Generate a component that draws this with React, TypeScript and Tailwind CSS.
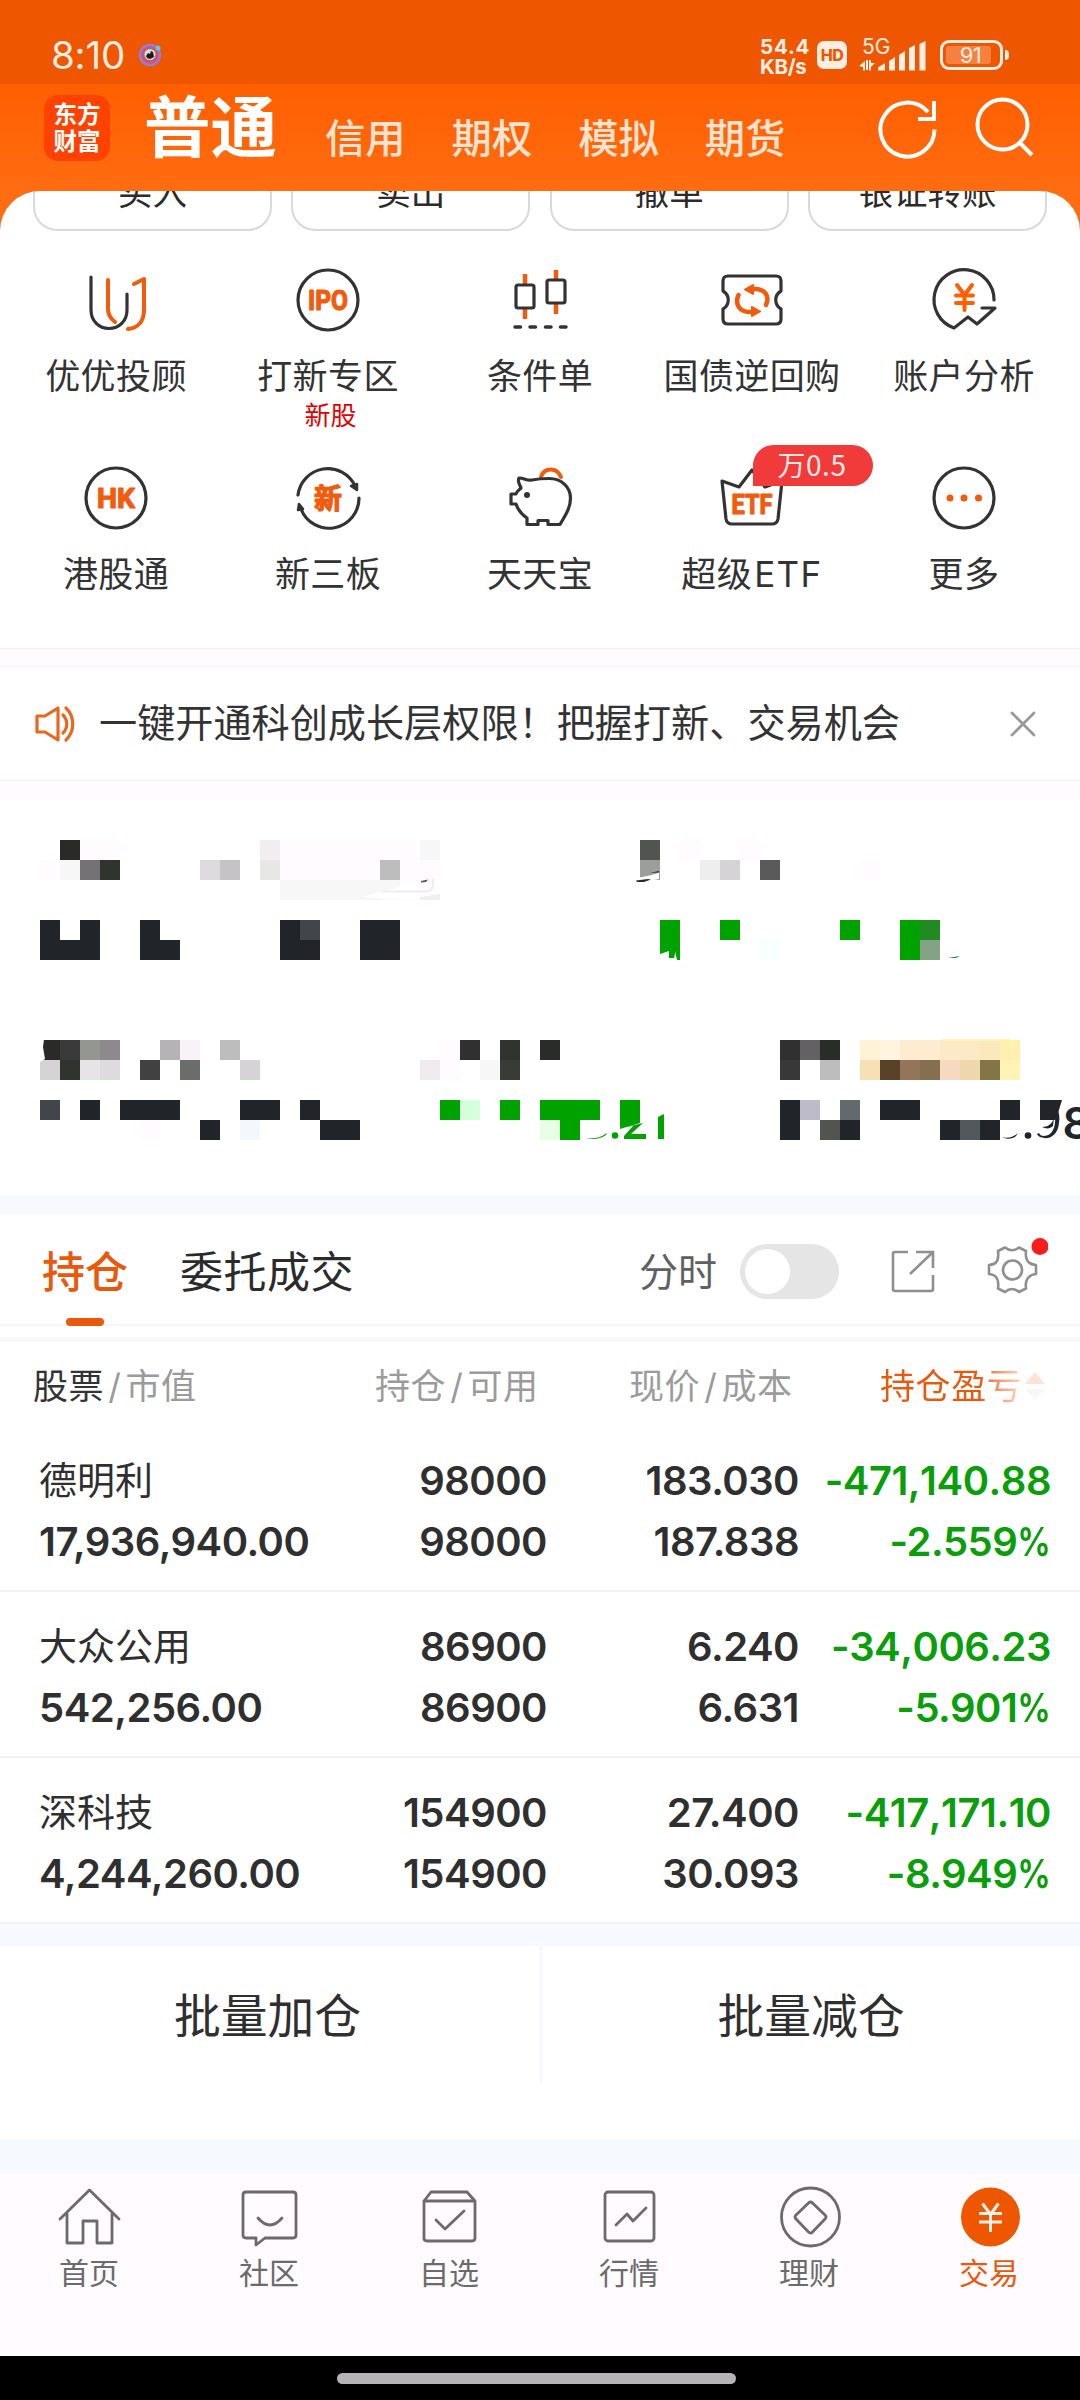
import type { ReactNode } from "react";

const DARK = "#21252a";
const GREEN = "#00a200";

/* ---------- status bar ---------- */

function StatusBar() {
  return (
    <div className="flex h-[84px] items-start bg-[#ee5600] pl-[51px] text-[#ffeee3]">
      <div className="mt-[32px] w-[87px] text-[38.500px] leading-[46px] tracking-[-0.2px]">8:10</div>
      <svg className="mt-[42px] h-[25px] w-[25px]" viewBox="0 0 25 25">
        <circle cx="12" cy="13" r="10" fill="#d8506a" stroke="#8f7fd8" strokeWidth="2.5" />
        <circle cx="12" cy="12.500" r="5.500" fill="#c9e6d8" />
        <path d="M8 14l2-3 2 1 1-3 2 1 1 5-4 2-3-1z" fill="#1b1b1b" />
        <circle cx="20" cy="6" r="2.500" fill="#4fd0f0" />
      </svg>
      <div className="mt-[37px] ml-[597px] w-[57px] text-[20.500px] leading-[20px] font-bold">
        <div className="tracking-[0.8px]">54.4</div>
        <div className="tracking-[-0.3px]">KB/s</div>
      </div>
      <div className="mt-[41px] flex h-[28px] w-[30px] items-center justify-center rounded-[7px] bg-[#ffeee3] text-[16px] leading-none font-extrabold tracking-[-0.5px] text-[#ee5600]">
        HD
      </div>
      <svg className="mt-[26px] ml-[12px] h-[46px] w-[70px]" viewBox="0 -10 70 46" fill="#ffeee3">
        <text x="3" y="17.500" fontSize="21" fontFamily="Inter">5G</text>
        <path d="M0 30l6-5v9.500h-2V31zM7 24h2v10H7zM10 24h2v3l4 0-4 4v3.500h-2z" />
        <path d="M19 34.500v-3l7-4.500v7.500zM30 34.500V25l6-4v13.500zM40 34.500V19l6-4v19.500zM50 34.500V12l6-3v25.500zM60.500 34.500V8l6-3v29.500z" />
      </svg>
      <div className="mt-[40px] ml-[11px] flex h-[30px] w-[63px] items-center rounded-[9px] border-[3px] border-[#ffeee3] p-[3px]">
        <div className="flex h-[18px] w-[45px] items-center justify-center rounded-[3px] bg-[#f6813f] pl-[4px] text-[22px] leading-none tracking-[-0.5px]">
          91
        </div>
      </div>
      <div className="mt-[50px] ml-[2px] h-[10px] w-[4px] rounded-r-[4px] bg-[#ffeee3]" />
    </div>
  );
}

/* ---------- orange header ---------- */

function Header() {
  const tabs = ["信用", "期权", "模拟", "期货"];
  return (
    <div className="flex h-[107px] items-start pl-[44px] text-white">
      <div className="mt-[11px] flex h-[66px] w-[66px] flex-col items-center justify-center rounded-[14px] bg-[#ff4200] text-[23.500px] leading-[27px] font-bold">
        <span>东方</span>
        <span>财富</span>
      </div>
      <div className="mt-[11px] ml-[34px] w-[133px] text-[66.500px] leading-[66px] font-bold whitespace-nowrap">普通</div>
      <div className="mt-[33px] ml-[48px] flex gap-[46px] text-[40.300px] leading-[44px] font-medium text-[#ffe2d0]">
        {tabs.map((t) => (
          <span key={t}>{t}</span>
        ))}
      </div>
      <svg className="mt-[13px] ml-[92px] h-[64px] w-[64px]" viewBox="0 0 64 64" fill="none" stroke="#fff" strokeWidth="4">
        <path d="M57.500 32.500A27 27 0 1 1 51 15" />
        <path d="M57 4v18H41" />
      </svg>
      <svg className="mt-[11px] ml-[31px] h-[64px] w-[64px]" viewBox="0 0 64 64" fill="none" stroke="#fff" strokeWidth="4">
        <circle cx="30.500" cy="29.500" r="25" />
        <path d="M47 47l13 13" />
      </svg>
    </div>
  );
}

function OrderButtons() {
  return (
    <div className="flex h-[40px] items-end justify-between overflow-hidden rounded-t-[46px] bg-white px-[33px]">
      {["买入", "卖出", "撤单", "银证转账"].map((t) => (
        <div
          key={t}
          className="h-[80px] w-[239px] shrink-0 rounded-[24px] border-2 border-[#dcd7dc] text-center text-[34.500px] leading-[79px] text-[#2b2b2b]"
        >
          {t}
        </div>
      ))}
    </div>
  );
}

/* ---------- shortcuts ---------- */

function Icon({ children }: { children: ReactNode }) {
  return (
    <svg
      className="h-[70px] w-[70px]"
      viewBox="0 0 70 70"
      fill="none"
      stroke="#333"
      strokeWidth="3.200"
      strokeLinecap="round"
      strokeLinejoin="round"
    >
      {children}
    </svg>
  );
}

const O = "#f25b0c";

function Glyph({ children, size, y, width }: { children: string; size: number; y: number; width: number }) {
  return (
    <text
      x="35"
      y={y}
      textAnchor="middle"
      fontSize={size}
      fontWeight="700"
      fontFamily="Roboto, 'Noto Sans CJK SC', sans-serif"
      fill={O}
      stroke={O}
      strokeWidth="1.200"
      textLength={width}
      lengthAdjust="spacingAndGlyphs"
    >
      {children}
    </text>
  );
}

const icons: Record<string, ReactNode> = {
  advisor: (
    <Icon>
      <path d="M10 12v33c0 11 8 18.500 18 18.500S46 56 46 45V29" />
      <path d="M27 15v29c0 6 3 10 7 13" stroke={O} strokeWidth="4" />
      <path d="M53 19l10-5v31c0 11-6 18-16 19" stroke={O} strokeWidth="4" />
    </Icon>
  ),
  ipo: (
    <Icon>
      <circle cx="35" cy="35" r="30" />
      <Glyph size={28} y={45} width={40}>IPO</Glyph>
    </Icon>
  ),
  condition: (
    <Icon>
      <path d="M20 9v10M20 44v10M51 5v9M51 39v10" stroke={O} strokeWidth="4.500" strokeLinecap="butt" />
      <rect x="11" y="20" width="18" height="23" rx="2" />
      <rect x="42" y="15" width="18" height="23" rx="2" />
      <path d="M10 62h5.500M25 62h5.500M40.500 62h5.500M55.500 62h5.500" strokeWidth="3.500" />
    </Icon>
  ),
  repo: (
    <Icon>
      <path d="M11 11h48q5 0 5 5v10c-7 4-7 14 0 18v10q0 5-5 5H11q-5 0-5-5V44c7-4 7-14 0-18V16q0-5 5-5z" />
      <path d="M21.500 30c-4 9 1 17 11 17h5M49 40c4-9-1-16-11-16h-5" stroke={O} strokeWidth="4.500" />
      <path d="M28 24.500l8-4.500v9zM43 46.500l-8-4.500v9z" fill={O} stroke={O} strokeWidth="2" />
    </Icon>
  ),
  analysis: (
    <Icon>
      <path d="M65 35A30 30 0 1 0 25 63l14-11 9 7 18-16H53" />
      <path d="M28 20l7.500 10L43 20M27 30.500h17M27 38h17M35.500 30v15" stroke="#ff5f00" strokeWidth="4" />
    </Icon>
  ),
  hk: (
    <Icon>
      <circle cx="35" cy="35" r="30" />
      <Glyph size={28} y={45} width={38}>HK</Glyph>
    </Icon>
  ),
  neeq: (
    <Icon>
      <path d="M5 32A30 30 0 0 1 62 23M66 35A30 30 0 0 1 8 46" />
      <path d="M58 23l6-2v6zM6 41l4 5-5 1z" fill="#333" strokeWidth="2.500" />
      <Glyph size={28} y={45.5} width={28}>新</Glyph>
    </Icon>
  ),
  piggy: (
    <Icon>
      <path d="M36 14c3-10 16-10 20 0" stroke={O} strokeWidth="4" />
      <path d="M14 15c6 0 7 3 13 2 5-1 12-1.500 17-1.500 13 0 21.500 9 21.500 19.500 0 10-5 17-10.500 26.500H43v-4H33v4H22V55c-6-4-9-8-11-14H6V31h5c1-3 3-4 5-6-1-3-4-6-2-10z" />
      <circle cx="22" cy="32" r="3" fill="#333" stroke="none" />
    </Icon>
  ),
  etf: (
    <Icon>
      <path d="M5 18l17 6L35 7l13 17 17-6-4 38q-1 5-6 5H15q-5 0-6-5z" />
      <Glyph size={28} y={50.5} width={41}>ETF</Glyph>
    </Icon>
  ),
  more: (
    <Icon>
      <circle cx="35" cy="35" r="30" />
      <g fill={O} stroke="none">
        <circle cx="21" cy="35" r="3.500" />
        <circle cx="35" cy="35" r="3.500" />
        <circle cx="49.500" cy="35" r="3.500" />
      </g>
    </Icon>
  ),
};

const shortcuts: { icon: string; label: ReactNode; note?: string; badge?: string }[] = [
  { icon: "advisor", label: "优优投顾" },
  { icon: "ipo", label: "打新专区", note: "新股" },
  { icon: "condition", label: "条件单" },
  { icon: "repo", label: "国债逆回购" },
  { icon: "analysis", label: "账户分析" },
  { icon: "hk", label: "港股通" },
  { icon: "neeq", label: "新三板" },
  { icon: "piggy", label: "天天宝" },
  { icon: "etf", label: <>超级<span className="pl-[2px] tracking-[1.400px]">ETF</span></>, badge: "万0.5" },
  { icon: "more", label: "更多" },
];

function Shortcuts() {
  return (
    <div className="grid h-[417px] auto-rows-[198px] grid-cols-5 bg-white px-[10px] pt-[34px]">
      {shortcuts.map((s) => (
        <div key={s.icon} className="relative flex flex-col items-center">
          {icons[s.icon]}
          <div className="mt-[16px] text-[35px] leading-[50px] tracking-[0.4px] whitespace-nowrap text-[#333]">{s.label}</div>
          {s.note && <div className="-mt-[5px] pl-[5px] text-[26px] leading-[40px] text-[#e60000]">{s.note}</div>}
          {s.badge && (
            <div className="absolute top-[-18px] left-[107px] h-[41px] w-[120px] rounded-[21px] rounded-bl-none bg-[#f13a3a] pr-[2px] text-center font-['Noto_Sans_CJK_SC'] text-[28px] leading-[39px] tracking-[0.5px] text-[#ffeaea]">
              {s.badge}
            </div>
          )}
        </div>
      ))}
    </div>
  );
}

/* ---------- notice ---------- */

function Notice() {
  return (
    <div className="flex h-[113px] items-center bg-white pl-[34px]">
      <svg className="h-[40px] w-[42px]" viewBox="0 0 42 40" fill="none" stroke="#e8681f" strokeWidth="3.200" strokeLinejoin="round" strokeLinecap="round">
        <path d="M3 12h8l13-8v32l-13-8H3zM24 4v32" />
        <path d="M29 11c5 5 5 13 0 18M32 4c9 9 9 23 0 32" />
      </svg>
      <div className="-mt-[1px] ml-[23px] w-[911px] text-[38.150px] leading-[50px] whitespace-nowrap text-[#333]">
        一键开通科创成长层权限！把握打新、交易机会
      </div>
      <svg className="h-[26px] w-[26px]" viewBox="0 0 26 26" stroke="#999" strokeWidth="2.800" strokeLinecap="round">
        <path d="M2 2l22 22M24 2L2 24" />
      </svg>
    </div>
  );
}

/* ---------- pixelated account summary: [x, y, width in cells, colour], 20px cells ---------- */

const cells: [number, number, number, string][] = [
  [60, 840, 1, "#2a2a29"], [80, 840, 2, "#fffbff"], [260, 840, 1, "#f1edf0"], [280, 840, 7, "#fffbff"], [420, 840, 1, "#f7f7f7"],
  [640, 840, 1, "#52554f"], [680, 840, 1, "#fffbff"], [740, 840, 1, "#fffbff"],
  [40, 860, 1, "#fffbff"], [60, 860, 1, "#f7f7f7"], [80, 860, 1, "#747275"], [100, 860, 1, "#31332e"],
  [200, 860, 1, "#dedbde"], [220, 860, 1, "#c5c3c6"], [260, 860, 1, "#e7e7e6"], [280, 860, 8, "#fffbff"], [380, 860, 1, "#bdbdbd"],
  [640, 860, 1, "#9c9e9b"], [700, 860, 1, "#efeeee"], [720, 860, 1, "#d6d3d6"], [760, 860, 1, "#5a5a5a"], [860, 860, 1, "#fffbff"],
  [280, 880, 6, "#f7f7f7"], [400, 880, 2, "#fffbff"],
  [40, 920, 1, DARK], [80, 920, 1, DARK], [140, 920, 1, DARK], [280, 920, 1, DARK], [300, 920, 1, "#42454a"], [360, 920, 2, DARK],
  [660, 920, 1, GREEN], [720, 920, 1, GREEN], [840, 920, 1, GREEN], [900, 920, 1, GREEN], [920, 920, 1, "#218a21"],
  [40, 940, 3, DARK], [140, 940, 2, DARK], [280, 940, 2, DARK], [360, 940, 2, DARK],
  [660, 940, 1, GREEN], [760, 940, 1, "#f7ffff"], [900, 940, 1, GREEN], [920, 940, 1, "#84a284"],
  [40, 1040, 1, "#2a2a29"], [60, 1040, 1, "#3a3a3a"], [80, 1040, 1, "#949691"], [100, 1040, 1, "#8c8a8c"],
  [160, 1040, 1, "#b5b3b6"], [180, 1040, 1, "#f7f3f7"], [220, 1040, 1, "#bdbdbd"], [440, 1040, 1, "#fffbff"],
  [460, 1040, 1, "#313031"], [500, 1040, 1, "#31332e"], [540, 1040, 1, "#2a2c29"],
  [780, 1040, 1, "#313031"], [800, 1040, 1, "#636163"], [820, 1040, 1, "#2a2c29"],
  [860, 1040, 1, "#fff3d6"], [880, 1040, 1, "#fff4e0"], [900, 1040, 2, "#ffebd0"], [940, 1040, 2, "#fceac6"], [980, 1040, 1, "#fce8bd"], [1000, 1040, 1, "#fff0ad"],
  [40, 1060, 1, "#d6d3d6"], [60, 1060, 1, "#31332e"], [80, 1060, 1, "#e7e3e7"], [100, 1060, 1, "#dedbde"],
  [140, 1060, 1, "#424142"], [180, 1060, 1, "#6b6d6a"], [240, 1060, 1, "#d6d3d6"],
  [420, 1060, 1, "#efebef"], [440, 1060, 1, "#fffbff"], [480, 1060, 1, "#f7f7f7"], [500, 1060, 1, "#393b36"],
  [780, 1060, 1, "#393839"], [820, 1060, 1, "#bdbdbd"],
  [860, 1060, 1, "#f7e0b5"], [880, 1060, 1, "#5a4228"], [900, 1060, 1, "#94755c"], [920, 1060, 1, "#84704f"],
  [940, 1060, 1, "#f7d9c1"], [960, 1060, 1, "#efd6ad"], [980, 1060, 1, "#847548"], [1000, 1060, 1, "#fff4b5"],
  [40, 1100, 1, "#42454a"], [80, 1100, 1, DARK], [120, 1100, 3, DARK], [240, 1100, 2, DARK], [300, 1100, 1, DARK],
  [440, 1100, 1, GREEN], [460, 1100, 1, "#d6ffdb"], [500, 1100, 1, GREEN], [540, 1100, 3, GREEN], [620, 1100, 1, GREEN],
  [780, 1100, 1, DARK], [800, 1100, 1, "#bdbac9"], [840, 1100, 1, "#636a6d"], [880, 1100, 2, DARK], [1000, 1100, 1, DARK],
  [140, 1120, 1, "#fffbff"], [200, 1120, 1, DARK], [240, 1120, 1, "#f5f7ff"], [320, 1120, 2, DARK],
  [540, 1120, 1, "#e7ffe7"], [560, 1120, 1, GREEN],
  [780, 1120, 1, DARK], [820, 1120, 1, "#52544f"], [840, 1120, 1, DARK], [940, 1120, 1, DARK], [960, 1120, 1, "#52595c"], [980, 1120, 1, DARK],
];

function AccountSummary() {
  return (
    <svg className="block h-[395px] w-[1080px] bg-white" viewBox="0 800 1080 395">
      <g shapeRendering="crispEdges">
        {cells.map(([x, y, w, c]) => (
          <rect key={`${x}-${y}`} x={x} y={y} width={w * 20} height="20" fill={c} />
        ))}
      </g>
      <path d="M363 896.500l37-9.500 4-3h29v-5h7v15l-16 4q-32 3-61-1.500z" fill="#fff" />
      <path d="M382 891.500h43q8 0 8-7V879" stroke="#efecef" strokeWidth="2" fill="none" />
      <path d="M421 881l7-1.500-2 2.500-5 .5z" fill="#555" />
      <path d="M420 900v-3l20-3v6z" fill="#f1edf0" />
      <path d="M633 881c5-5 15-4 25-8l1-1v7l-10 2h-16z" fill="#fff" />
      <path d="M636 880.500l12-1.500 3 .5-7 2.500h-7zM650 873l9-2v1.500z" fill="#2a2a29" />
      <path d="M660 954l9-3v7h5v-4l1 4v-7l2 9h-17z" fill="#fff" />
      <path d="M948 958l12-2-4 2z" fill={GREEN} />
      <path d="M39 1039h5l-1 8 2 12-5 3z" fill="#fff" />
      <rect x="942" y="1039" width="68" height="2" fill="#fff8a8" opacity=".8" />
      <path d="M586 1138c8 1 14 0 21-5l-1 2c-5 4-14 5-20 3z" fill={GREEN} />
      <circle cx="615" cy="1135.500" r="3.300" fill={GREEN} />
      <path d="M620 1120h20v3l-20 6z" fill={GREEN} />
      <path d="M626 1127l17-4-12 11h15v5h-22v-3l9-10z" fill={GREEN} />
      <path d="M658 1117l6-3v25h-6z" fill={GREEN} />
      <path d="M1040 1100h22l-4 13-3 7h-15z" fill={DARK} />
      <path d="M1002 1137c5 2 12 0 16-4l-2 3c-3 3-9 4-14 1z" fill={DARK} />
      <circle cx="1028" cy="1135.500" r="3.300" fill={DARK} />
      <path d="M1042 1127c6 0 10-3 12-9l-1 8c-3 3-7 3-11 1z" fill={DARK} />
      <path d="M1037 1134c3 6 20 8 22-11 1-6 0-11-2-15l-2 9c1 10-3 19-11 19-3 0-4-1-5-3z" fill={DARK} />
      <text x="1062.500" y="1139" fontSize="44" fontWeight="600" fontFamily="Inter" fill={DARK}>8</text>
    </svg>
  );
}

/* ---------- positions ---------- */

function PositionTabs() {
  return (
    <>
      <div className="flex h-[112px] items-start border-b-2 border-[#f6f6f6] bg-white pl-[42px] text-[43px] leading-[60px]">
        <div className="relative mt-[28px] font-medium text-[#e8590c]">
          持仓
          <div className="absolute top-[76px] left-[24px] h-[8px] w-[38px] rounded-[4px] bg-[#e8590c]" />
        </div>
        <div className="mt-[28px] ml-[52px] w-[178px] whitespace-nowrap tracking-[0.5px] text-[#2b2b2b]">委托成交</div>
        <div className="mt-[28px] ml-[281px] text-[39px] text-[#606060]">分时</div>
        <div className="mt-[30px] ml-[23px] h-[55px] w-[99px] rounded-full bg-[#e6e5e6] p-[5px]">
          <div className="h-[45px] w-[45px] rounded-full bg-white" />
        </div>
        <svg className="mt-[34px] ml-[50px] h-[46px] w-[46px]" viewBox="0 0 46 46" fill="none" stroke="#8f8f8f" strokeWidth="2.600">
          <path d="M19 4H6q-2 0-2 2v35q0 2 2 2h36q2 0 2-2V27" />
          <path d="M27 4h17v16M44 4L21 26" />
        </svg>
        <svg className="mt-[23px] ml-[47px] h-[64px] w-[66px]" viewBox="0 0 66 64" fill="none" stroke="#8f8f8f" strokeWidth="2.600" strokeLinejoin="round">
          <path d="M23 10.500Q30 16 37 10.500L44 14q-1 8 3 11.500 2 2 7 2.500v9q-5 .5-7 3-4 3.500-3 11.500L37 55q-7-6-14 0l-7-3.500q1-8-2-11.500-2-2.500-7-3v-9q5-.5 7-2.500 3-3.500 2-11.500z" />
          <circle cx="30.500" cy="33" r="9.500" />
          <circle cx="58" cy="9.500" r="8.500" fill="#fb1c1c" stroke="none" />
        </svg>
      </div>
      <div className="h-[11px] bg-white" />
      <div className="h-[5px] bg-[#f5faff]" />
    </>
  );
}

function Slash() {
  return <span className="px-[4px]">/</span>;
}

function HeaderRow() {
  return (
    <div className="flex h-[84px] bg-white pl-[33px] text-[35px] leading-[88px] tracking-[0.6px] whitespace-nowrap text-[#9b9b9b]">
      <div className="w-[342px]">
        <span className="text-[#333]">股票</span>
        <Slash />
        市值
      </div>
      <div className="w-[254px]">
        持仓
        <Slash />
        可用
      </div>
      <div className="w-[251px]">
        现价
        <Slash />
        成本
      </div>
      <div className="flex h-[88px] items-center">
        <span className="bg-linear-to-r from-[#e8590c] from-70% to-[#fbd9c4] bg-clip-text text-transparent">持仓盈亏</span>
        <svg className="ml-[3px] h-[30px] w-[20px]" viewBox="0 0 20 30">
          <path d="M10 1l10 12H0z" fill="#fde3d3" />
          <path d="M10 29L0 18h20z" fill="#f8f6f8" />
        </svg>
      </div>
    </div>
  );
}

const positions = [
  { name: "德明利", value: "17,936,940.00", qty: "98000", avail: "98000", price: "183.030", cost: "187.838", pl: "-471,140.88", pct: "-2.559" },
  { name: "大众公用", value: "542,256.00", qty: "86900", avail: "86900", price: "6.240", cost: "6.631", pl: "-34,006.23", pct: "-5.901" },
  { name: "深科技", value: "4,244,260.00", qty: "154900", avail: "154900", price: "27.400", cost: "30.093", pl: "-417,171.10", pct: "-8.949" },
];

function PositionRow({ p }: { p: (typeof positions)[number] }) {
  return (
    <div className="grid h-[166px] grid-cols-[290px_1fr_252px_252px] border-b-2 border-[#f1f2f4] bg-white pt-[24px] pr-[29px] pl-[39px] text-right text-[40px] leading-[61px] font-semibold tracking-[-0.500px] text-[#2f2f2f]">
      <div className="text-left">
        <div className="h-[61px] text-[38px] leading-[61px] font-normal tracking-normal">{p.name}</div>
        <div>{p.value}</div>
      </div>
      <div>
        <div>{p.qty}</div>
        <div>{p.avail}</div>
      </div>
      <div>
        <div>{p.price}</div>
        <div>{p.cost}</div>
      </div>
      <div className="text-[#0a9e0a]">
        <div className="[font-kerning:none]">{p.pl}</div>
        <div>
          {p.pct}
          <span className="ml-[-6px] inline-block origin-right scale-x-[0.84]">%</span>
        </div>
      </div>
    </div>
  );
}

/* ---------- bottom navigation ---------- */

function NavIcon({ children }: { children: ReactNode }) {
  return (
    <svg className="h-[64px] w-[64px]" viewBox="0 0 64 64" fill="none" stroke="#6b6b6b" strokeWidth="2.800" strokeLinecap="round" strokeLinejoin="round">
      {children}
    </svg>
  );
}

const nav: { label: string; active?: boolean; icon: ReactNode }[] = [
  {
    label: "首页",
    icon: (
      <NavIcon>
        <path d="M2 33L31.500 4 61 33M9 28v29h16V35h14v22h15V28" />
      </NavIcon>
    ),
  },
  {
    label: "社区",
    icon: (
      <NavIcon>
        <path d="M8 6h47q3 0 3 3v40q0 3-3 3H27l-9 7v-7H8q-3 0-3-3V9q0-3 3-3z" />
        <path d="M20 32q12 14 24 0" />
      </NavIcon>
    ),
  },
  {
    label: "自选",
    icon: (
      <NavIcon>
        <path d="M6 15l7-9h36l8 9v37q0 3-3 3H9q-3 0-3-3zM6 15h51M18 34l9 9 19-18" />
      </NavIcon>
    ),
  },
  {
    label: "行情",
    icon: (
      <NavIcon>
        <rect x="7" y="6" width="49" height="49" rx="3" />
        <path d="M18 39l11-11 6 7 13-13" />
      </NavIcon>
    ),
  },
  {
    label: "理财",
    icon: (
      <NavIcon>
        <circle cx="32.500" cy="31" r="29" />
        <path d="M30.500 17q2-2 4 0l12.500 12q2 2 0 4L34.500 46q-2 2-4 0L18 33q-2-2 0-4z" />
      </NavIcon>
    ),
  },
  {
    label: "交易",
    active: true,
    icon: (
      <NavIcon>
        <circle cx="32.500" cy="31" r="29.500" fill="#ee5600" stroke="none" />
        <path d="M24.500 17.500l8 11 8-11M21 27.500h23M21 36h23M32.500 28v18" stroke="#fff1e8" strokeWidth="3" strokeLinecap="butt" />
      </NavIcon>
    ),
  },
];

export default function App() {
  return (
    <div className="h-[2400px] w-[1080px] overflow-hidden bg-white font-['Inter','Noto_Sans_CJK_SC',sans-serif]">
      <StatusBar />
      <div className="bg-linear-to-b from-[#ff5f00] to-[#ff6d12] to-80%">
        <Header />
        <OrderButtons />
      </div>
      <Shortcuts />
      <div className="h-[19px] border-y border-[#f5f1f5] bg-[#fffbff]" />
      <Notice />
      <div className="h-[20px] border-t border-[#f5f1f5] bg-[#fffbff]" />
      <AccountSummary />
      <div className="h-[19px] bg-[#f6f9ff]" />
      <PositionTabs />
      <HeaderRow />
      {positions.map((p) => (
        <PositionRow key={p.name} p={p} />
      ))}
      <div className="h-[22px] bg-[#f6f9ff]" />
      <div className="flex h-[193px] bg-white text-[46.800px] leading-[140px] text-[#2f2f2f]">
        <div className="h-[137px] w-[543px] border-r-[4px] border-[#f8f9ff] pr-[4px] text-center">批量加仓</div>
        <div className="flex-1 pr-[1px] text-center">批量减仓</div>
      </div>
      <div className="h-[35px] bg-[#f6faff]" />
      <div className="flex h-[182px] bg-[#fffbff] pt-[12px]">
        {nav.map((n) => (
          <div key={n.label} className="flex w-[180px] flex-col items-center">
            {n.icon}
            <div className={`mt-[3px] pr-[2px] text-[30px] leading-[40px] ${n.active ? "text-[#e8590c]" : "text-[#6b6b6b]"}`}>{n.label}</div>
          </div>
        ))}
      </div>
      <div className="flex h-[44px] bg-black pt-[17px] pl-[337px]">
        <div className="h-[11px] w-[399px] rounded-full bg-[#b5b3b6]" />
      </div>
    </div>
  );
}
